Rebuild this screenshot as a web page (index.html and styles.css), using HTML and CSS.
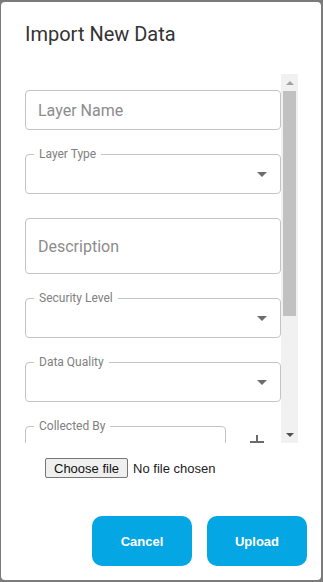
FILE: index.html
```html
<!DOCTYPE html>
<html lang="en">
<head>
    <meta charset="UTF-8">
    <meta name="viewport" content="width=device-width, initial-scale=1.0">
    <title>Import New Data</title>
    <link rel="stylesheet" href="styles.css">
</head>
<body>
    <div class="dialog">
        <h2 class="dialog-title">Import New Data</h2>

        <div class="dialog-body">
            <div class="dialog-content">
                <div class="field">
                    <input class="field-input" type="text" placeholder="Layer Name">
                </div>

                <div class="field field-select">
                    <span class="field-label">Layer Type</span>
                    <svg class="arrow" viewBox="0 0 24 24" width="24" height="24"><path d="M7 10l5 5 5-5z"/></svg>
                </div>

                <div class="field field-tall">
                    <input class="field-input" type="text" placeholder="Description">
                </div>

                <div class="field field-select">
                    <span class="field-label">Security Level</span>
                    <svg class="arrow" viewBox="0 0 24 24" width="24" height="24"><path d="M7 10l5 5 5-5z"/></svg>
                </div>

                <div class="field field-select">
                    <span class="field-label">Data Quality</span>
                    <svg class="arrow" viewBox="0 0 24 24" width="24" height="24"><path d="M7 10l5 5 5-5z"/></svg>
                </div>

                <div class="field-row">
                    <div class="field field-select">
                        <span class="field-label">Collected By</span>
                        <svg class="arrow" viewBox="0 0 24 24" width="24" height="24"><path d="M7 10l5 5 5-5z"/></svg>
                    </div>
                    <button class="add-btn" type="button">
                        <svg viewBox="0 0 24 24" width="24" height="24"><path d="M19 13h-6v6h-2v-6H5v-2h6V5h2v6h6v2z"/></svg>
                    </button>
                </div>

                <div class="field">
                    <input class="field-input" type="text" placeholder="Collection Date">
                </div>
            </div>

            <div class="scrollbar">
                <div class="scroll-btn">
                    <svg width="8" height="4" viewBox="0 0 8 4"><path d="M0 4h8L4 0z" fill="#a3a3a3"/></svg>
                </div>
                <div class="scroll-thumb"></div>
                <div class="scroll-space"></div>
                <div class="scroll-btn">
                    <svg width="8" height="4" viewBox="0 0 8 4"><path d="M0 0h8L4 4z" fill="#505050"/></svg>
                </div>
            </div>
        </div>

        <div class="file-row">
            <label class="file-btn">Choose file<input type="file" class="file-input"></label>
            <span class="file-name">No file chosen</span>
        </div>

        <div class="dialog-actions">
            <button class="action-btn" type="button">Cancel</button>
            <button class="action-btn" type="button">Upload</button>
        </div>
    </div>
</body>
</html>
```

FILE: styles.css
```css
body {
    margin: 0;
    background-color: #7b7b7b;
    font-family: Roboto, "Liberation Sans", sans-serif;
    height: 582px;
    overflow: hidden;
}

.dialog {
    width: 320px;
    height: 578px;
    margin: 2px 0 0 1px;
    background: #fff;
    border-radius: 4px;
    display: flex;
    flex-direction: column;
}

.dialog-title {
    margin: 0;
    padding: 16px 24px;
    font-size: 20px;
    font-weight: 400;
    line-height: 32px;
    color: #333;
}

.dialog-body {
    display: flex;
    margin: 8px 0 0 24px;
    height: 369px;
}

.dialog-content {
    width: 256px;
    overflow: hidden;
    padding-top: 16px;
    box-sizing: border-box;
}

/* scrollbar drawn by hand, classic style with arrows */
.scrollbar {
    width: 17px;
    background: #f1f1f1;
    display: flex;
    flex-direction: column;
}

.scroll-btn {
    height: 17px;
    display: flex;
    align-items: center;
    justify-content: center;
}

.scroll-thumb {
    height: 225px;
    margin: 0 2px;
    background: #c1c1c1;
}

.scroll-space {
    flex: 1;
}

.field {
    position: relative;
    height: 40px;
    border: 1px solid #c4c4c4;
    border-radius: 4px;
    box-sizing: border-box;
    margin-bottom: 24px;
    display: flex;
    align-items: center;
}

.field-tall {
    height: 56px;
}

.field-select {
    justify-content: flex-end;
    padding-right: 6px;
}

.field-input {
    border: none;
    outline: none;
    background: transparent;
    width: 100%;
    height: 100%;
    padding: 0 12px;
    box-sizing: border-box;
    font-family: Roboto, sans-serif;
    font-size: 16px;
    color: #333;
}

.field-input::placeholder {
    color: #8c8c8c;
}

.field-label {
    position: absolute;
    top: -8px;
    left: 8px;
    padding: 0 5px;
    background: #fff;
    font-size: 12px;
    line-height: 14px;
    color: #808080;
}

.arrow {
    fill: #6e6e6e;
}

.field-row {
    display: flex;
    gap: 7px;
    margin-bottom: 24px;
}

.field-row .field {
    flex: 1;
    margin-bottom: 0;
}

.add-btn {
    width: 48px;
    height: 32px;
    padding: 0;
    border: none;
    background: none;
    display: flex;
    align-items: center;
    justify-content: center;
}

.add-btn svg {
    fill: #6b6b6b;
}

.file-row {
    margin-top: 15px;
    padding-left: 44px;
    display: flex;
    align-items: center;
    gap: 5px;
    font-family: "Liberation Sans", Arial, sans-serif;
    font-size: 13px;
}

.file-btn {
    height: 20px;
    padding: 0 8px;
    box-sizing: border-box;
    display: flex;
    align-items: center;
    background: #efefef;
    border: 1px solid #767676;
    border-radius: 2px;
    color: #111;
}

.file-input {
    display: none;
}

.file-name {
    color: #222;
}

.dialog-actions {
    margin-top: auto;
    padding: 0 14px 14px 0;
    display: flex;
    justify-content: flex-end;
    gap: 15px;
}

.action-btn {
    width: 100px;
    height: 50px;
    border: none;
    border-radius: 10px;
    background-color: #04a6e3;
    color: #fff;
    font-family: "Liberation Sans", Arial, sans-serif;
    font-size: 13px;
    font-weight: bold;
    cursor: pointer;
}
```
